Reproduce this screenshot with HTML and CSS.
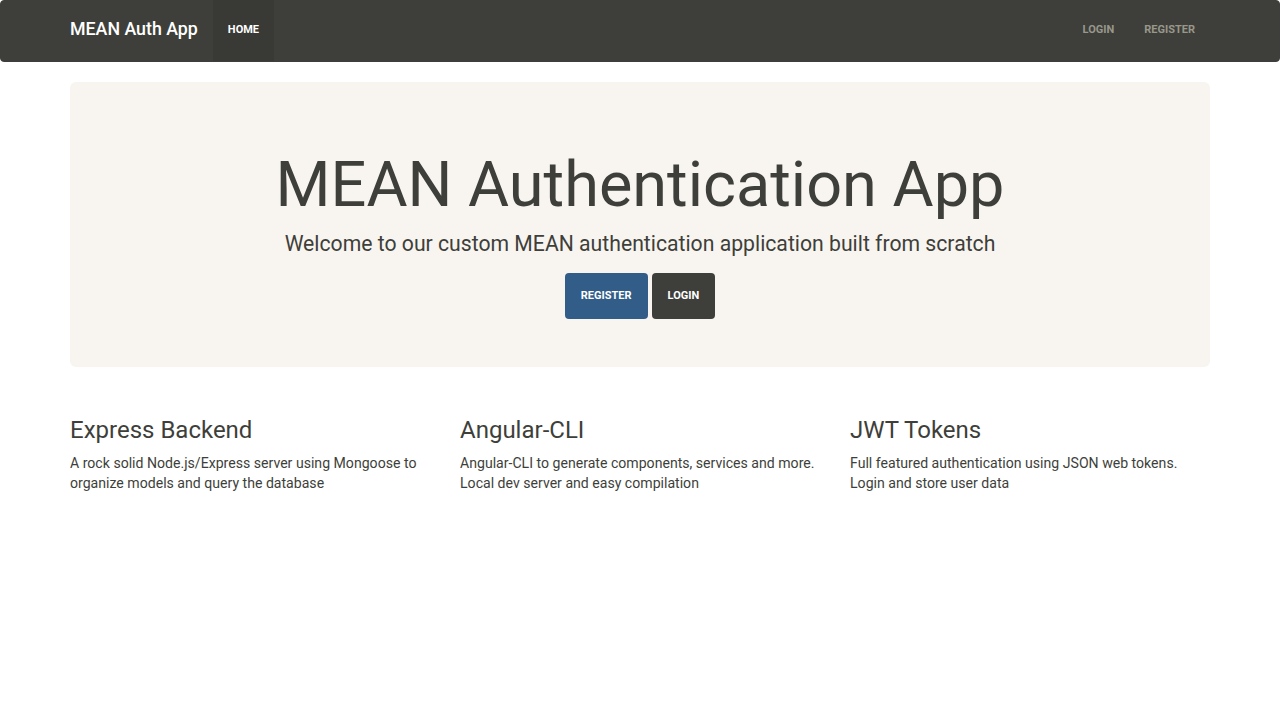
FILE: index.html
```html
<!DOCTYPE html>
<html lang="en">
<head>
<meta charset="utf-8">
<title>MEAN Auth App</title>
<link rel="stylesheet" href="styles.css">
</head>
<body>
<nav class="navbar">
  <div class="container nav-inner">
    <div class="nav-left">
      <a class="brand" href="#">MEAN Auth App</a>
      <ul class="nav">
        <li><a class="active" href="#">Home</a></li>
      </ul>
    </div>
    <ul class="nav">
      <li><a href="#">Login</a></li>
      <li><a href="#">Register</a></li>
    </ul>
  </div>
</nav>
<main class="container">
  <section class="jumbotron">
    <h1>MEAN Authentication App</h1>
    <p class="lead">Welcome to our custom MEAN authentication application built from scratch</p>
    <div class="actions">
      <a class="btn btn-primary" href="#">Register</a>
      <a class="btn btn-default" href="#">Login</a>
    </div>
  </section>
  <div class="row">
    <div class="col">
      <h3>Express Backend</h3>
      <p>A rock solid Node.js/Express server using Mongoose to organize models and query the database</p>
    </div>
    <div class="col">
      <h3>Angular-CLI</h3>
      <p>Angular-CLI to generate components, services and more. Local dev server and easy compilation</p>
    </div>
    <div class="col">
      <h3>JWT Tokens</h3>
      <p>Full featured authentication using JSON web tokens. Login and store user data</p>
    </div>
  </div>
</main>
</body>
</html>
```

FILE: styles.css
```css
* { box-sizing: border-box; }
html, body { margin: 0; padding: 0; }
body {
  font-family: Roboto, "Helvetica Neue", Arial, sans-serif;
  font-size: 14px;
  line-height: 20px;
  color: #3e3f3a;
  background: #fff;
}
a { text-decoration: none; }
.container {
  width: 1170px;
  margin: 0 auto;
  padding: 0 15px;
}
.navbar {
  background: #3e3f3a;
  border: 1px solid #3e3f3a;
  border-radius: 4px;
  height: 62px;
  margin-bottom: 20px;
}
.nav-inner {
  display: flex;
  justify-content: space-between;
  height: 60px;
  margin-top: -1px;
}
.nav-left { display: flex; height: 60px; }
.brand {
  display: flex;
  align-items: center;
  height: 60px;
  padding: 0 15px 2px 0;
  color: #fff;
  font-size: 17.8px;
  font-weight: 500;
}
.nav {
  display: flex;
  list-style: none;
  margin: 0;
  padding: 0;
  height: 60px;
}
.nav li a {
  display: flex;
  align-items: center;
  height: 61px;
  padding: 0 15px 2px;
  color: #98978b;
  font-size: 11px;
  font-weight: 700;
  text-transform: uppercase;
}
.nav li a.active {
  color: #fff;
  background: #393a35;
}
.jumbotron {
  background: #f8f5f0;
  border-radius: 6px;
  padding: 48px 60px;
  margin-bottom: 30px;
  text-align: center;
}
.jumbotron h1 {
  font-size: 63px;
  line-height: 69px;
  font-weight: 400;
  margin: 20px 0 10px;
}
.lead {
  font-size: 21.2px;
  line-height: 30px;
  margin: 0 0 14px;
}
.actions {
  display: flex;
  justify-content: center;
  gap: 4px;
}
.btn {
  display: flex;
  align-items: center;
  height: 46px;
  padding: 0 16px;
  border-radius: 4px;
  color: #fff;
  font-size: 11px;
  font-weight: 700;
  text-transform: uppercase;
}
.btn-primary { background: #325d88; }
.btn-default { background: #3e3f3a; }
.row {
  display: flex;
  margin: 0 -15px;
}
.col {
  width: 390px;
  padding: 0 15px;
}
.col h3 {
  font-size: 24px;
  line-height: 26px;
  font-weight: 400;
  margin: 20px 0 10px;
}
.col p { margin: 0 0 10px; font-size: 14.1px; }
```
